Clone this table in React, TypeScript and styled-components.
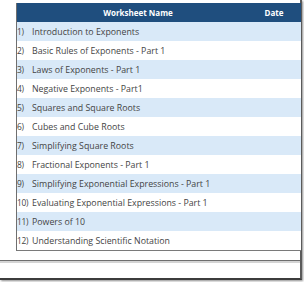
import React from "react";
import styled, { createGlobalStyle } from "styled-components";

const Global = createGlobalStyle`
  html, body { margin: 0; padding: 0; background: #ffffff; }
  body { width: 304px; height: 282px; overflow: hidden; font-family: "Open Sans", "Noto Sans", sans-serif; }
`;

const Frame = styled.div`
  width: 302px;
  height: 280px;
  box-sizing: border-box;
  background: #ffffff;
  border-right: 2px solid #5a5a5a;
  border-bottom: 2px solid #3c3c3c;
  box-shadow: 1px 1px 2px rgba(0, 0, 0, 0.45);
  display: flex;
  flex-direction: column;
  padding-top: 3px;
`;

const Table = styled.div`
  margin-left: 16px;
  width: 284px;
  border-left: 1px solid #6f6f6f;
  border-bottom: 1px solid #7a7a7a;
  display: flex;
  flex-direction: column;
`;

const HeaderRow = styled.div`
  height: 19px;
  background: #1f4e7e;
  display: grid;
  grid-template-columns: 242px 1fr;
  align-items: center;
  color: #ffffff;
  font-weight: 700;
  font-size: 8px;
`;

const HeadCell = styled.div<{ $padRight?: number }>`
  text-align: center;
  padding-right: ${(p) => p.$padRight ?? 0}px;
`;

const Row = styled.div<{ $alt: boolean }>`
  height: 19px;
  background: ${(p) => (p.$alt ? "#d9e9f8" : "#ffffff")};
  display: grid;
  grid-template-columns: 15px 1fr;
  align-items: center;
  color: #444444;
  font-size: 8.8px;
  white-space: nowrap;
  overflow: hidden;
`;

const Num = styled.span`
  font-size: 8.4px;
  letter-spacing: -0.3px;
  overflow: visible;
`;

const Name = styled.span``;

const Rule = styled.div`
  margin-top: 9px;
  height: 1px;
  background: #6e6e6e;
  border-bottom: 2px solid #d4d4d4;
`;

const items = [
  "Introduction to Exponents",
  "Basic Rules of Exponents - Part 1",
  "Laws of Exponents - Part 1",
  "Negative Exponents - Part1",
  "Squares and Square Roots",
  "Cubes and Cube Roots",
  "Simplifying Square Roots",
  "Fractional Exponents - Part 1",
  "Simplifying Exponential Expressions - Part 1",
  "Evaluating Exponential Expressions - Part 1",
  "Powers of 10",
  "Understanding Scientific Notation",
];

export default function App() {
  return (
    <>
      <Global />
      <Frame>
        <Table>
          <HeaderRow>
            <HeadCell>Worksheet Name</HeadCell>
            <HeadCell $padRight={12}>Date</HeadCell>
          </HeaderRow>
          {items.map((t, i) => (
            <Row key={t} $alt={i % 2 === 0}>
              <Num>{i + 1})</Num>
              <Name>{t}</Name>
            </Row>
          ))}
        </Table>
        <Rule />
      </Frame>
    </>
  );
}
